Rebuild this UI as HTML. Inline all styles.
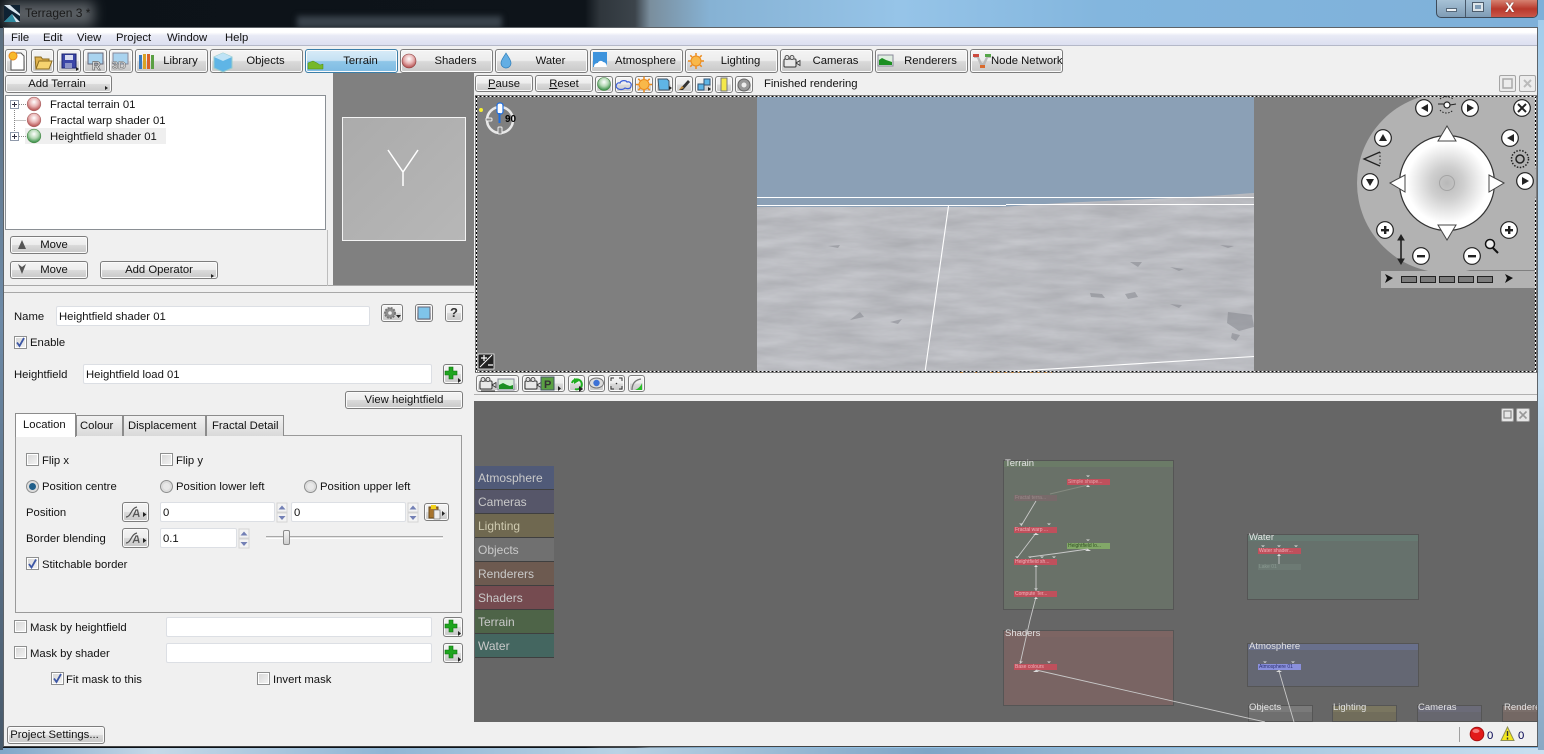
<!DOCTYPE html>
<html><head><meta charset="utf-8"><title>Terragen 3</title>
<style>
html,body{margin:0;padding:0;width:1544px;height:754px;overflow:hidden;background:#111}
body{position:relative;font:11.3px/16px "Liberation Sans",sans-serif;color:#111}
div,span.a{position:absolute;box-sizing:border-box}
.t{white-space:nowrap;margin-top:1px}
.b{border:1px solid #7d7d7d;border-radius:3px;background:linear-gradient(#f4f4f4,#ededed 48%,#dadada 52%,#c8c8c8);box-shadow:inset 0 0 0 1px #fbfbfb;text-align:center;white-space:nowrap}
.i{background:#fff;border:1px solid #dcdfe4;border-radius:2px;padding:2px 2px;white-space:nowrap;line-height:16px}
.c{width:13px;height:13px;border:1px solid #8e8f8f;background:linear-gradient(135deg,#d6d6d6,#f4f4f4);box-shadow:inset 0 0 0 1px #fff}
.s{width:79px;height:24px;left:475px;color:#c9c9c9;padding:5px 3px;font-size:12px;line-height:14px;border-bottom:1px solid #3f3f3f}
.g{border:1px solid #555;}
.n{height:6px;width:43px}
.l{color:#e2e2e2;font-size:9.5px;line-height:10px;white-space:nowrap}
.nt{font-size:5px;line-height:6px;white-space:nowrap;padding-left:1px;overflow:hidden}
.tb{top:49px;width:93px;height:24px;padding:3px 0 0 18px;line-height:16px}
</style></head>
<body>
<!-- desktop -->
<div style="left:0;top:0;width:1544px;height:754px;background:linear-gradient(90deg,#0c1218 0,#0e141a 585px,#2f363c 600px,#3c444b 635px,#7a8e9d 650px,#86b2d4 710px,#96c4e8 900px,#83b6de 1100px,#7eb0d9 1544px)"></div>
<div style="left:4px;top:2px;width:90px;height:24px;background:#6e7377;filter:blur(6px);opacity:.8"></div>
<div style="left:297px;top:16px;width:205px;height:12px;background:#3a434c;filter:blur(3px)"></div>
<div style="left:0;top:748px;width:1544px;height:6px;background:linear-gradient(90deg,#7fa6c8,#c6d9e8 10%,#8fb5d4 25%,#b9d2e4 40%,#7ea5c6 60%,#a5c6de 80%,#c9dff0)"></div>
<div style="left:0;top:28px;width:3px;height:722px;background:linear-gradient(#5c6f80,#6e8ba8 40%,#48596a)"></div>
<div style="left:1538px;top:20px;width:6px;height:730px;background:linear-gradient(#a3cdec,#c5def0 50%,#88a8c4)"></div>
<div class="t" style="left:25px;top:4px;color:#1a1a1a;font-size:12px">Terragen 3 *</div>
<!-- window controls -->
<div style="left:1436px;top:-2px;width:102px;height:20px;border:1px solid #3d4b5a;border-radius:0 0 5px 5px;background:linear-gradient(#a9c4d8,#7f9cb6);overflow:hidden">
 <div style="left:28px;top:0;width:1px;height:18px;background:#47586a"></div>
 <div style="left:54px;top:0;width:47px;height:18px;background:linear-gradient(#d98a7a,#b8392c 55%,#c9574a)"></div>
 <div style="left:9px;top:9px;width:11px;height:4px;background:#eef2f5;border:1px solid #56687a"></div>
 <div style="left:35px;top:3px;width:12px;height:10px;background:#dde5ea;border:1px solid #4d5d6d;box-shadow:inset 0 0 0 2px #dde5ea,inset 0 0 0 9px #7f9cb6"></div>
 <div class="t" style="left:68px;top:0;color:#fff;font:bold 14px/15px 'Liberation Sans',sans-serif;text-shadow:0 0 1px #333">X</div>
</div>
<!-- window -->
<div style="left:3px;top:27px;width:1535px;height:720px;background:#f0f0f0;border:1px solid #5e6368;border-bottom-color:#444"></div>
<div style="left:4px;top:28px;width:1533px;height:18px;background:linear-gradient(#fff,#fff 25%,#e8eaf5 45%,#dcdff0);border-bottom:1px solid #b4b8c8"></div>
<div class="t" style="left:11px;top:29px">File</div>
<div class="t" style="left:43px;top:29px">Edit</div>
<div class="t" style="left:77px;top:29px">View</div>
<div class="t" style="left:116px;top:29px">Project</div>
<div class="t" style="left:167px;top:29px">Window</div>
<div class="t" style="left:225px;top:29px">Help</div>
<!-- main toolbar -->
<div class="b" style="left:5px;top:49px;width:22px;height:24px"></div>
<div class="b" style="left:31px;top:49px;width:23px;height:24px"></div>
<div class="b" style="left:57px;top:49px;width:24px;height:24px"></div>
<div class="b" style="left:83px;top:49px;width:24px;height:24px"></div>
<div class="b" style="left:109px;top:49px;width:24px;height:24px"></div>
<div class="b tb" style="left:135px;width:73px">Library</div>
<div class="b tb" style="left:210px">Objects</div>
<div class="b tb" style="left:305px;background:linear-gradient(#d9ecf8,#c5e1f3 48%,#8fc6e8 52%,#7ebbe3);border-color:#3b7ea8">Terrain</div>
<div class="b tb" style="left:400px">Shaders</div>
<div class="b tb" style="left:495px">Water</div>
<div class="b tb" style="left:590px">Atmosphere</div>
<div class="b tb" style="left:685px">Lighting</div>
<div class="b tb" style="left:780px">Cameras</div>
<div class="b tb" style="left:875px">Renderers</div>
<div class="b tb" style="left:970px;padding-left:20px">Node Network</div>
<!-- left top -->
<div class="b" style="left:5px;top:75px;width:107px;height:18px;line-height:16px;padding-right:3px">Add Terrain</div>
<div style="left:5px;top:95px;width:321px;height:135px;background:#fff;border:1px solid #8a8f94"></div>
<div style="left:25px;top:128px;width:141px;height:16px;background:#efefef"></div>
<div class="t" style="left:50px;top:96px">Fractal terrain 01</div>
<div class="t" style="left:50px;top:112px">Fractal warp shader 01</div>
<div class="t" style="left:50px;top:128px">Heightfield shader 01</div>
<div style="left:333px;top:73px;width:141px;height:213px;background:#808080"></div>
<div style="left:342px;top:117px;width:124px;height:124px;background:linear-gradient(135deg,#ababab,#b7b7b7);border:1px solid #f4f4f4"></div>
<div class="b" style="left:10px;top:236px;width:78px;height:18px;line-height:17px;padding-left:10px">Move</div>
<div class="b" style="left:10px;top:261px;width:78px;height:18px;line-height:17px;padding-left:10px">Move</div>
<div class="b" style="left:100px;top:261px;width:118px;height:18px;line-height:17px">Add Operator</div>
<div style="left:4px;top:285px;width:470px;height:8px;border-top:1px solid #a8a8a8;border-bottom:1px solid #a8a8a8;background:#f0f0f0"></div>
<div style="left:327px;top:230px;width:1px;height:56px;background:#bdbdbd"></div>
<!-- form -->
<div class="t" style="left:14px;top:308px">Name</div>
<div class="i" style="left:56px;top:306px;width:314px;height:20px">Heightfield shader 01</div>
<div class="b" style="left:381px;top:304px;width:22px;height:18px"></div>
<div class="b" style="left:415px;top:304px;width:18px;height:18px"></div>
<div class="b" style="left:445px;top:304px;width:18px;height:18px;font:bold 13px/15px 'Liberation Sans',sans-serif;color:#333">?</div>
<div class="c" style="left:14px;top:336px"></div>
<div class="t" style="left:30px;top:334px">Enable</div>
<div class="t" style="left:14px;top:366px">Heightfield</div>
<div class="i" style="left:83px;top:364px;width:349px;height:20px">Heightfield load 01</div>
<div class="b" style="left:443px;top:364px;width:20px;height:20px"></div>
<div class="b" style="left:345px;top:391px;width:118px;height:18px;line-height:17px">View heightfield</div>
<!-- tabs -->
<div style="left:15px;top:435px;width:447px;height:178px;border:1px solid #9a9a9a;background:#f0f0f0"></div>
<div class="t" style="left:76px;top:414px;width:47px;height:21px;border:1px solid #8c8c8c;border-bottom:0;background:linear-gradient(#f2f2f2,#d9d9d9);padding:2px 0 0 3px">Colour</div>
<div class="t" style="left:123px;top:414px;width:83px;height:21px;border:1px solid #8c8c8c;border-bottom:0;background:linear-gradient(#f2f2f2,#d9d9d9);padding:2px 0 0 4px">Displacement</div>
<div class="t" style="left:206px;top:414px;width:78px;height:21px;border:1px solid #8c8c8c;border-bottom:0;background:linear-gradient(#f2f2f2,#d9d9d9);padding:2px 0 0 5px">Fractal Detail</div>
<div class="t" style="left:15px;top:412px;width:61px;height:24px;border:1px solid #8c8c8c;border-bottom:0;background:#fff;padding:3px 0 0 7px;">Location</div>
<div class="c" style="left:26px;top:453px"></div><div class="t" style="left:42px;top:452px">Flip x</div>
<div class="c" style="left:160px;top:453px"></div><div class="t" style="left:176px;top:452px">Flip y</div>
<div class="t" style="left:42px;top:478px">Position centre</div>
<div class="t" style="left:176px;top:478px">Position lower left</div>
<div class="t" style="left:320px;top:478px">Position upper left</div>
<div class="t" style="left:26px;top:504px">Position</div>
<div class="b" style="left:122px;top:502px;width:27px;height:20px"></div>
<div class="i" style="left:160px;top:502px;width:115px;height:20px">0</div>
<div class="i" style="left:291px;top:502px;width:115px;height:20px">0</div>
<div class="b" style="left:424px;top:503px;width:25px;height:18px"></div>
<div class="t" style="left:26px;top:530px">Border blending</div>
<div class="b" style="left:122px;top:528px;width:27px;height:20px"></div>
<div class="i" style="left:160px;top:528px;width:77px;height:20px">0.1</div>
<div style="left:266px;top:536px;width:177px;height:3px;background:#e4e4e4;border-top:1px solid #a8a8a8;border-bottom:1px solid #fff"></div>
<div style="left:283px;top:530px;width:7px;height:15px;background:linear-gradient(#f4f4f4,#cfcfcf);border:1px solid #8a8a8a;border-radius:2px"></div>
<div class="c" style="left:26px;top:557px"></div>
<div class="t" style="left:42px;top:556px">Stitchable border</div>
<div class="c" style="left:14px;top:620px"></div><div class="t" style="left:30px;top:619px">Mask by heightfield</div>
<div class="i" style="left:166px;top:617px;width:266px;height:20px"></div>
<div class="b" style="left:443px;top:617px;width:20px;height:20px"></div>
<div class="c" style="left:14px;top:646px"></div><div class="t" style="left:30px;top:645px">Mask by shader</div>
<div class="i" style="left:166px;top:643px;width:266px;height:20px"></div>
<div class="b" style="left:443px;top:643px;width:20px;height:20px"></div>
<div class="c" style="left:51px;top:672px"></div><div class="t" style="left:66px;top:671px">Fit mask to this</div>
<div class="c" style="left:257px;top:672px"></div><div class="t" style="left:273px;top:671px">Invert mask</div>
<!-- status -->
<div style="left:4px;top:722px;width:1533px;height:24px;background:#f0f0f0"></div>
<div class="b" style="left:7px;top:726px;width:98px;height:18px;line-height:17px;padding-right:3px">Project Settings...</div>
<div style="left:1459px;top:727px;width:1px;height:15px;background:#a0a0a0"></div>
<div class="t" style="left:1487px;top:727px;color:#000050">0</div>
<div class="t" style="left:1518px;top:727px;color:#000050">0</div>
<!-- render toolbar -->
<div class="b" style="left:475px;top:75px;width:58px;height:17px;line-height:16px"><u>P</u>ause</div>
<div class="b" style="left:535px;top:75px;width:58px;height:17px;line-height:16px"><u>R</u>eset</div>
<div class="b" style="left:595px;top:76px;width:18px;height:17px"></div>
<div class="b" style="left:615px;top:76px;width:18px;height:17px"></div>
<div class="b" style="left:635px;top:76px;width:18px;height:17px"></div>
<div class="b" style="left:655px;top:76px;width:18px;height:17px"></div>
<div class="b" style="left:675px;top:76px;width:18px;height:17px"></div>
<div class="b" style="left:695px;top:76px;width:18px;height:17px"></div>
<div class="b" style="left:715px;top:76px;width:18px;height:17px"></div>
<div class="b" style="left:735px;top:76px;width:18px;height:17px"></div>
<div class="t" style="left:764px;top:75px">Finished rendering</div>
<div style="left:1499px;top:75px;width:17px;height:17px;background:#ececec;border:1px solid #a5a5a5;border-radius:2px"></div>
<div style="left:1519px;top:75px;width:17px;height:17px;background:#ececec;border:1px solid #a5a5a5;border-radius:2px"></div>
<!-- viewport -->
<div style="left:475px;top:95px;width:1062px;height:278px;background:#7f7f7f;overflow:hidden"></div>
<div style="left:757px;top:97px;width:497px;height:274px;background:linear-gradient(#8aa0b7,#8ba1b6);"></div>
<!-- viewport bottom toolbar -->
<div class="b" style="left:476px;top:375px;width:43px;height:17px"></div>
<div class="b" style="left:522px;top:375px;width:43px;height:17px"></div>
<div class="b" style="left:568px;top:375px;width:17px;height:17px"></div>
<div class="b" style="left:588px;top:375px;width:17px;height:17px"></div>
<div class="b" style="left:608px;top:375px;width:17px;height:17px"></div>
<div class="b" style="left:628px;top:375px;width:17px;height:17px"></div>
<div style="left:474px;top:394px;width:1063px;height:7px;background:#f0f0f0;border-top:1px solid #b0b0b0"></div>
<!-- node network -->
<div style="left:474px;top:401px;width:1063px;height:321px;background:#666;overflow:hidden"></div>
<div style="left:1501px;top:408px;width:13px;height:14px;background:#e6e6e6;border:1px solid #999;border-radius:2px"></div>
<div style="left:1516px;top:408px;width:14px;height:14px;background:#e6e6e6;border:1px solid #999;border-radius:2px"></div>
<div class="s" style="top:466px;background:#505a78">Atmosphere</div>
<div class="s" style="top:490px;background:#565669">Cameras</div>
<div class="s" style="top:514px;background:#6f6850;color:#cfcab0">Lighting</div>
<div class="s" style="top:538px;background:#707070">Objects</div>
<div class="s" style="top:562px;background:#6d5a50">Renderers</div>
<div class="s" style="top:586px;background:#754b50">Shaders</div>
<div class="s" style="top:610px;background:#4e6448">Terrain</div>
<div class="s" style="top:634px;background:#446660">Water</div>
<div class="g" style="left:1003px;top:460px;width:171px;height:150px;background:linear-gradient(#6b7b67 0,#6b7b67 6px,#697168 6px)"></div>
<div class="g" style="left:1003px;top:630px;width:171px;height:76px;background:linear-gradient(#7d6563 0,#7d6563 6px,#796463 6px)"></div>
<div class="g" style="left:1247px;top:534px;width:172px;height:66px;background:linear-gradient(#667a72 0,#667a72 6px,#66716c 6px)"></div>
<div class="g" style="left:1247px;top:643px;width:172px;height:44px;background:linear-gradient(#69708c 0,#69708c 6px,#646773 6px)"></div>
<div class="g" style="left:1248px;top:705px;width:65px;height:17px;background:linear-gradient(#7a7a7a 0,#7a7a7a 6px,#6f6f6f 6px)"></div>
<div class="g" style="left:1332px;top:705px;width:65px;height:17px;background:linear-gradient(#7a7660 0,#7a7660 6px,#716d5b 6px)"></div>
<div class="g" style="left:1417px;top:705px;width:65px;height:17px;background:linear-gradient(#6b6b78 0,#6b6b78 6px,#67676f 6px)"></div>
<div class="g" style="left:1502px;top:705px;width:36px;height:17px;background:linear-gradient(#7a6e6a 0,#7a6e6a 6px,#746864 6px)"></div>
<div class="l" style="left:1005px;top:459px">Terrain</div>
<div class="l" style="left:1005px;top:629px">Shaders</div>
<div class="l" style="left:1249px;top:533px">Water</div>
<div class="l" style="left:1249px;top:642px">Atmosphere</div>
<div class="l" style="left:1249px;top:703px">Objects</div>
<div class="l" style="left:1333px;top:703px">Lighting</div>
<div class="l" style="left:1418px;top:703px">Cameras</div>
<div class="l" style="left:1504px;top:703px;width:33px;overflow:hidden">Renderers</div>
<div class="n nt" style="left:1067px;top:479px;background:#bf505c;color:#e8a0a8">Simple shape...</div>
<div class="n nt" style="left:1014px;top:495px;background:#786a6a;color:#9a8a8a">Fractal terra...</div>
<div class="n nt" style="left:1014px;top:527px;background:#bf505c;color:#f0b0b8">Fractal warp ...</div>
<div class="n nt" style="left:1067px;top:543px;background:#82a868;color:#2f4f22">Heightfield lo...</div>
<div class="n nt" style="left:1014px;top:559px;background:#bf505c;color:#f0b0b8">Heightfield sh...</div>
<div class="n nt" style="left:1014px;top:591px;background:#bf505c;color:#f0b0b8">Compute Ter...</div>
<div class="n nt" style="left:1014px;top:664px;background:#bf505c;color:#f0b0b8">Base colours</div>
<div class="n nt" style="left:1258px;top:548px;background:#bf505c;color:#f0b0b8">Water shader...</div>
<div class="n nt" style="left:1258px;top:564px;background:#6d7a74;color:#8a9a92">Lake 01</div>
<div class="n nt" style="left:1258px;top:664px;background:#8a90dc;color:#2a2f70">Atmosphere 01</div>

<!-- overlay drawing -->
<svg width="1544" height="754" viewBox="0 0 1544 754" style="position:absolute;left:0;top:0">
<defs>
<filter id="tx" x="0" y="0" width="100%" height="100%" color-interpolation-filters="sRGB"><feTurbulence type="fractalNoise" baseFrequency="0.018 0.09" numOctaves="5" seed="11"/><feColorMatrix type="matrix" values="0.13 0 0 0 0.665  0.13 0 0 0 0.67  0.13 0 0 0 0.69  0 0 0 0 1"/></filter>
<radialGradient id="ball" cx="50%" cy="35%" r="65%"><stop offset="0" stop-color="#fff"/><stop offset=".5" stop-color="#e8b4b4"/><stop offset="1" stop-color="#b24a4a"/></radialGradient>
<radialGradient id="ballg" cx="50%" cy="35%" r="65%"><stop offset="0" stop-color="#fff"/><stop offset=".5" stop-color="#b5d8b5"/><stop offset="1" stop-color="#2f8a3f"/></radialGradient>
<radialGradient id="joy"><stop offset="0" stop-color="#b8b8b8"/><stop offset=".35" stop-color="#cfcfcf"/><stop offset=".85" stop-color="#fff"/><stop offset="1" stop-color="#fff"/></radialGradient>
<clipPath id="rc"><rect x="757" y="97" width="497" height="274"/></clipPath>
<clipPath id="nc"><rect x="1350" y="97" width="186" height="192"/></clipPath>
<clipPath id="nn"><rect x="474" y="401" width="1063" height="321"/></clipPath>
<g id="nb"><circle r="8.3" fill="#fff" stroke="#222" stroke-width="1.2"/></g>
<g id="plus"><rect x="-4" y="-1" width="8" height="2.4" fill="#222"/><rect x="-1" y="-4" width="2.4" height="8" fill="#222"/></g>
<g id="addg"><path d="M-2 -6h4v4h4v4h-4v4h-4v-4h-4v-4h4z" fill="#1fa51f" stroke="#0b6e0b" stroke-width=".6"/><path d="M7 5l3 2.5-3 2.5z" fill="#222"/></g>
<g id="spin"><path d="M1 0h10v9h-10z" fill="#f3f3f3" stroke="#d4d4d4"/><path d="M6 2.500l3.500 4h-7z" fill="#7380b5"/><path d="M1 10h10v9h-10z" fill="#f3f3f3" stroke="#d4d4d4"/><path d="M6 17l3.500-4h-7z" fill="#7380b5"/></g>
<g id="curve"><path d="M4 14c5 0 5-9 11-10" fill="none" stroke="#555" stroke-width="1.200"/><path d="M11 14l3-7h1.500l1.500 7M12.500 11.500h3.500" fill="none" stroke="#555" stroke-width="1.300"/><path d="M21 9l3.500 2.500-3.500 2.500z" fill="#222"/></g>
<g id="cam"><rect x="0" y="4" width="12" height="8" rx="1" fill="#e8e8e8" stroke="#333"/><circle cx="3" cy="2.500" r="2" fill="#ddd" stroke="#333" stroke-width=".8"/><circle cx="8" cy="2.500" r="2" fill="#ddd" stroke="#333" stroke-width=".8"/><path d="M12 8l4-2.500v5z" fill="#ddd" stroke="#333" stroke-width=".8"/></g>
<g id="sun"><circle r="5" fill="#f8b84a" stroke="#ec8a1a"/><path d="M0-8v2.500M0 5.500v2.500M-8 0h2.500M5.500 0h2.500M-5.700-5.700l1.800 1.800M3.900 3.900l1.800 1.800M-5.700 5.700l1.800-1.800M3.900-3.900l1.800-1.800" stroke="#ec8a1a" stroke-width="1.500"/></g>
<g id="chk"><path d="M3 6.500l2.500 3.500 4.500-8" fill="none" stroke="#3d57a5" stroke-width="1.800"/></g>
<g id="radio"><circle cx="6.500" cy="6.500" r="6" fill="#dcdcdc" stroke="#8e8f8f"/><circle cx="6.500" cy="6.500" r="3.500" fill="#e8e8e8"/></g>
</defs>

<!-- logo -->
<rect x="4" y="5" width="16" height="17" fill="#0f2233"/>
<path d="M4 5h6l10 9v2L9 9zM4 22l8-8 4 4 4 4z" fill="#d8e4ee"/><path d="M4 22l8-8 4 8z" fill="#2f8aa0"/>

<!-- top toolbar icons -->
<path d="M11 53h10l3 3v14H11z" fill="#fff" stroke="#555"/><circle cx="13" cy="56" r="4" fill="#f7b92b" stroke="#e8891a"/>
<path d="M36 69l-1-12h6l1.500 2H49v3z" fill="#e0b24e" stroke="#8a6a1e"/><path d="M36 69l3-8h13l-3 8z" fill="#f6d36f" stroke="#8a6a1e"/>
<path d="M62 54h14v14H62z" fill="#3b46a8" stroke="#1d2570"/><rect x="65" y="55" width="8" height="5" fill="#d9ddf0"/><rect x="65" y="63" width="7" height="5" fill="#8b93c8"/><path d="M76 67l3 2-3 2z" fill="#222"/>
<rect x="88" y="53" width="15" height="11" fill="#a9d3ef" stroke="#667"/><text x="92" y="70" font-family="Liberation Sans" font-weight="bold" font-size="12" fill="#eee" stroke="#666" stroke-width=".7">R</text>
<rect x="113" y="53" width="15" height="11" fill="#a9d3ef" stroke="#889"/><text x="112" y="69" font-family="Liberation Sans" font-weight="bold" font-size="11" fill="#ddd" stroke="#777" stroke-width=".6">3D</text>
<g><rect x="139" y="55" width="3" height="14" fill="#3a7bbf"/><rect x="143" y="54" width="3" height="15" fill="#d9a325"/><rect x="147" y="54" width="3" height="15" fill="#d9622a"/><rect x="151" y="55" width="3" height="14" fill="#5aa043"/></g>
<path d="M214 57l9-4 9 4v11l-9 4-9-4z" fill="#5fb5e6" stroke="#9cc"/><path d="M214 57l9 4 9-4-9-4z" fill="#bfe3f6"/>
<path d="M308 69v-6l5-2 4 2 3 2 3-1v5z" fill="#76b82a" stroke="#4c8a12" stroke-width=".5"/>
<circle cx="409" cy="61" r="7" fill="url(#ball)" stroke="#8a3a3a" stroke-width=".6"/>
<path d="M506 53c3 5 5 7 5 10a5 5 0 0 1-10 0c0-3 2-5 5-10z" fill="#63aee4" stroke="#2e7db8" stroke-width=".7"/>
<rect x="593" y="52" width="14" height="15" fill="#3d93dc"/><path d="M594 67c0-3 2-4 4-4 0-2 4-3 5-1 2 0 4 2 4 5z" fill="#fff"/>
<use href="#sun" x="696" y="61"/>
<use href="#cam" x="784" y="55"/>
<rect x="878" y="55" width="15" height="11" fill="#dfeee0" stroke="#889"/><path d="M879 65v-5l3-2 4 2 3 1 3 1v3z" fill="#1c8f22"/>
<path d="M974 54h5v3l3 6h1l3-6v-3h5v4h-3l-3 7v3h-5v-3l-3-7h-3z" fill="#bbb"/><rect x="973" y="54" width="6" height="3" fill="#cc4b3f"/><rect x="985" y="54" width="6" height="3" fill="#55a648"/><rect x="980" y="65" width="5" height="3" fill="#d96a2e"/>

<!-- small arrows on buttons -->
<path d="M105 86l3 2-3 2z M211 274l3 2-3 2z" fill="#222"/>
<path d="M22 240l-4 9h8zM18 264l4 10 4-10-4 3z" fill="#555"/>

<!-- tree -->
<g fill="none" stroke="#888" stroke-dasharray="1 1"><path d="M14.500 108V132M19 104.500h8M14.500 120.500h12M19 136.500h8"/></g>
<g fill="#fff" stroke="#8f99aa"><rect x="10.500" y="100.500" width="8" height="8"/><rect x="10.500" y="132.500" width="8" height="8"/></g>
<path d="M12 104.500h5M14.500 102v5M12 136.500h5M14.500 134v5" stroke="#334"/>
<circle cx="34" cy="104" r="6.800" fill="url(#ball)" stroke="#a66" stroke-width=".6"/>
<circle cx="34" cy="120" r="6.800" fill="url(#ball)" stroke="#a66" stroke-width=".6"/>
<circle cx="34" cy="136" r="6.800" fill="url(#ballg)" stroke="#4a8a4a" stroke-width=".6"/>
<!-- preview -->
<path d="M388 150l15 22 15-22M403 172v14" fill="none" stroke="#fff" stroke-width="1.500"/>

<!-- form icons -->
<circle cx="390" cy="313" r="5" fill="#8f8f8f" stroke="#777" stroke-width="2" stroke-dasharray="2 1"/><circle cx="390" cy="313" r="1.800" fill="#eee"/><path d="M396 315h5l-2.500 3z" fill="#222"/>
<rect x="418" y="307" width="12" height="12" fill="#7fc4ea" stroke="#667"/>
<use href="#chk" x="14" y="336"/><use href="#chk" x="26" y="557.500"/><use href="#chk" x="51" y="672"/>
<use href="#addg" x="451" y="373"/><use href="#addg" x="451" y="626"/><use href="#addg" x="451" y="652"/>
<use href="#radio" x="26" y="480"/><use href="#radio" x="160" y="480"/><use href="#radio" x="304" y="480"/>
<circle cx="32.500" cy="486.500" r="3.500" fill="#1f5f8a"/>
<use href="#curve" x="122" y="503"/><use href="#curve" x="122" y="529"/>
<use href="#spin" x="276" y="503"/><use href="#spin" x="407" y="503"/><use href="#spin" x="238" y="529"/>
<rect x="429" y="507" width="9" height="11" fill="#a8742c" stroke="#6a4a1a"/><rect x="431" y="505" width="5" height="4" fill="#f2d21a"/><rect x="434" y="510" width="6" height="9" fill="#eee" stroke="#777" stroke-width=".7"/><path d="M442 511l3 2.500-3 2.500z" fill="#222"/>

<!-- render toolbar icons -->
<circle cx="604" cy="84" r="6.500" fill="url(#ballg)" stroke="#3f7f3f" stroke-width=".6"/>
<path d="M617 88c-2-2 0-6 3-5 1-3 6-3 7-1 3-1 5 2 4 4 0 3-4 3-6 2-2 2-6 2-8 0z" fill="none" stroke="#3c5fd8" stroke-width="1.200"/>
<use href="#sun" x="644" y="84.500"/>
<path d="M658 79h9l2 2v9h-10z" fill="#5fb5e6" stroke="#456"/><path d="M669 86l3 2-3 2z" fill="#222"/>
<path d="M679 90l9-10 2 2-7 8z" fill="#333"/><path d="M679 90l3-4 2 2z" fill="#c58f3e"/>
<path d="M698 84h6v6h-6zM704 79h6v6h-6z" fill="#5fb5e6" stroke="#357"/><path d="M708 87l3 2-3 2z" fill="#222"/>
<rect x="721" y="78" width="6" height="13" fill="#f4e84a" stroke="#777"/>
<circle cx="744" cy="85" r="6" fill="#999" stroke="#666"/><circle cx="744" cy="85" r="2.500" fill="#eee"/>
<rect x="1503" y="79" width="9" height="9" fill="none" stroke="#aaa" stroke-width="1.500"/>
<path d="M1524 80l7 7M1531 80l-7 7" stroke="#bbb" stroke-width="2"/>

<!-- render -->
<g clip-path="url(#rc)">
<svg x="757" y="193" width="497" height="178"><rect width="497" height="178" filter="url(#tx)"/></svg>
<path d="M757 97H1254V193L1210 196 1150 199 1060 203 1000 207H757z" fill="#8ba0b6"/>
<g fill="#85878e" opacity=".55">
<path d="M1090 293l12 1 3 4-14-1zM1125 294l10-2 3 5-10 2zM1228 312l24 3 2 12-15 4-12-8zM1232 333l8 2-4 6-5-3zM1170 304l12 1-3 3z"/>
<path d="M828 246l12-1-2 3zM1170 267l14 2-5 2zM1130 262l12 0-4 5zM860 312l-10 8 14-3zM890 322l12-3-4 5zM1220 245l14 1-6 2z"/>
</g>
<path d="M757 197.500H1254M757 205.500H1006M1006 204.500H1254M948.500 206L925 372M1254 356.500L1100 366 1000 372" fill="none" stroke="#fff" stroke-width="1.100"/>
</g>
<path d="M960 372h4M975 372h2M990 372h30M1030 372h22" stroke="#f08a1a" stroke-width="1" stroke-dasharray="3 4"/>

<!-- dotted viewport frame -->
<g fill="none" stroke-dasharray="2 2">
<path d="M475.500 96.500H1536.500M475.500 371.500H1536.500M476.500 96V372M1535.500 96V372" stroke="#000"/>
<path d="M475.500 96.500H1536.500M475.500 371.500H1536.500M476.500 96V372M1535.500 96V372" stroke="#fff" stroke-dashoffset="2"/>
</g>

<!-- compass -->
<circle cx="481" cy="110" r="2" fill="#f5ee30"/>
<circle cx="500" cy="120" r="13" fill="none" stroke="#e8e8e8" stroke-width="2.500"/>
<rect x="497" y="103" width="6" height="11" rx="2.500" fill="#fff" stroke="#1f6fe0" stroke-width="1.200"/>
<rect x="498.500" y="113" width="2" height="10" fill="#1f6fe0"/>
<text x="505" y="122" font-family="Liberation Sans" font-size="10" font-weight="bold" fill="#000">90</text>
<rect x="486" y="118" width="6" height="3" rx="1" fill="#888" stroke="#eee"/><rect x="498" y="127" width="4" height="7" rx="1" fill="#888" stroke="#eee"/>
<rect x="478" y="354" width="16" height="15" fill="#222" stroke="#eee" stroke-width=".8"/><path d="M480 367l12-12" stroke="#fff"/><path d="M481 358h6M484 355v6M488 365h5" stroke="#fff" stroke-width="1.200"/>

<!-- nav control -->
<g clip-path="url(#nc)">
<circle cx="1447" cy="183" r="90" fill="#b2b2b2"/>
<rect x="1447" y="97" width="88" height="173" fill="#b2b2b2"/>
</g>
<rect x="1381" y="271" width="154" height="17" fill="#b2b2b2"/>
<circle cx="1447" cy="183" r="47.500" fill="url(#joy)" stroke="#333" stroke-width="1.200"/>
<circle cx="1447" cy="183" r="7.500" fill="none" stroke="#a4a4a4"/>
<g fill="#fff" stroke="#444"><path d="M1447 126l9 15h-18zM1447 240l-9-15h18zM1390 183l15-8v17zM1504 183l-15-8v17z"/></g>
<use href="#nb" x="1424" y="108"/><path d="M1428 104v8l-7-4z" fill="#222"/>
<use href="#nb" x="1470" y="108"/><path d="M1467 104v8l7-4z" fill="#222"/>
<use href="#nb" x="1522" y="108"/><path d="M1518 104l8 8M1526 104l-8 8" stroke="#222" stroke-width="2"/>
<use href="#nb" x="1383" y="138"/><path d="M1379 141h8l-4-7z" fill="#222"/>
<use href="#nb" x="1370" y="182"/><path d="M1366 179h8l-4 7z" fill="#222"/>
<use href="#nb" x="1510" y="138"/><path d="M1514 134v8l-7-4z" fill="#222"/>
<use href="#nb" x="1525" y="181"/><path d="M1522 177v8l7-4z" fill="#222"/>
<use href="#nb" x="1385" y="230"/><use href="#plus" x="1385" y="230"/>
<use href="#nb" x="1509" y="230"/><use href="#plus" x="1509" y="230"/>
<use href="#nb" x="1421" y="256"/><rect x="1417" y="255" width="8" height="2.400" fill="#222"/>
<use href="#nb" x="1472" y="256"/><rect x="1468" y="255" width="8" height="2.400" fill="#222"/>
<path d="M1380 152l-16 7 16 7" fill="none" stroke="#222" stroke-width="1.300"/><path d="M1380 152v14" stroke="#222" stroke-dasharray="1.500 2"/>
<circle cx="1520" cy="159" r="4" fill="none" stroke="#222" stroke-width="1.500"/><circle cx="1520" cy="159" r="8.500" fill="none" stroke="#222" stroke-width="1.500" stroke-dasharray="1.500 1.500"/>
<circle cx="1447" cy="105" r="3" fill="#fff" stroke="#222" stroke-width="1.200"/><path d="M1438 104h6M1450 105l6-1" stroke="#222"/><path d="M1440 110c3 4 10 4 13 0M1440 99c3-3 10-3 13 0" fill="none" stroke="#222" stroke-dasharray="1.500 1.500"/>
<path d="M1401 235l-3 5h6zM1401 264l-3-5h6z" fill="#222" stroke="#222"/><path d="M1401 238v24" stroke="#222" stroke-width="1.600"/>
<circle cx="1490" cy="244" r="4.500" fill="#eee" stroke="#111" stroke-width="1.500"/><path d="M1493 248l5 5" stroke="#111" stroke-width="2"/>
<path d="M1385 274l8 4-8 5 2-5zM1505 274l8 4-8 5 2-5z" fill="#111"/>
<g fill="#7c7c7c" stroke="#222"><rect x="1401.500" y="276.500" width="15" height="6"/><rect x="1420.500" y="276.500" width="15" height="6"/><rect x="1439.500" y="276.500" width="15" height="6"/><rect x="1458.500" y="276.500" width="15" height="6"/><rect x="1477.500" y="276.500" width="15" height="6"/></g>

<!-- viewport toolbar icons -->
<use href="#cam" x="480" y="377"/><path d="M481 391h14" stroke="#222"/>
<rect x="498" y="379" width="16" height="11" fill="#d9efd9" stroke="#889"/><path d="M499 389v-4l4-2 4 2 3 1 3-1v4z" fill="#1c8f22"/>
<use href="#cam" x="525" y="377"/>
<rect x="541" y="377" width="13" height="13" fill="#5aa043" stroke="#456"/><text x="544" y="388" font-family="Liberation Sans" font-weight="bold" font-size="11" fill="#333">P</text><path d="M558 386l3 2.500-3 2.500z" fill="#222"/>
<path d="M572 383a5 5 0 1 1 3 6" fill="none" stroke="#1fae1f" stroke-width="2"/><path d="M574 378l5 3-5 3z" fill="#1fae1f"/><path d="M579 386l4 3-4 3z" fill="#222"/>
<ellipse cx="596.500" cy="383" rx="7" ry="5" fill="#ddd" stroke="#777"/><circle cx="596.500" cy="383" r="3.200" fill="#3d72d6"/>
<path d="M611 381v-3h3M619 378h3v3M622 386v3h-3M614 389h-3v-3" fill="none" stroke="#333"/><circle cx="616.500" cy="383.500" r=".8" fill="#333"/>
<path d="M632 390c0-6 3-10 9-11" fill="none" stroke="#777" stroke-width="1.300"/><path d="M635 390c3-1 6-4 7-7v7z" fill="#27c027"/>

<!-- node window buttons -->
<rect x="1504" y="411" width="7" height="7" fill="none" stroke="#888" stroke-width="1.200"/><path d="M1519.500 411.500l7 7M1526.500 411.500l-7 7" stroke="#999" stroke-width="1.600"/>

<!-- graph lines -->
<g clip-path="url(#nn)" fill="none" stroke="#c8c8c8" stroke-width=".9">
<path d="M1036 501L1021 526M1036 533L1017 558M1088 549L1060 553 1030 557M1036 565V591M1036 597L1030 620 1020 664"/>
<path d="M1036 670L1265 722M1279 671L1294 722M1279 554V564"/>
<path d="M1088 485L1050 494" stroke="#858a80"/>
</g>
<g fill="#ddd">
<path d="M1021 525l2-1.500h-4zM1049 525l2-1.500h-4zM1088 477l2-1.500h-4zM1088 541l2-1.500h-4zM1017 558l2-1.500h-4zM1030 558l2-1.500h-4zM1042 558l2-1.500h-4zM1054 558l2-1.500h-4zM1036 590l2-1.500h-4zM1263 547l2-1.500h-4zM1279 547l2-1.500h-4zM1296 547l2-1.500h-4zM1265 663l2-1.500h-4zM1293 663l2-1.500h-4zM1021 663l2-1.500h-4zM1049 663l2-1.500h-4z"/>
<path d="M1036 533l3 2h-6zM1088 485l2 2h-4zM1088 549l3 2h-6zM1036 565l2 2h-4zM1036 597l2 2h-4zM1279 554l2 2h-4zM1279 670l3 2h-6zM1036 670l3 2h-6z"/>
</g>
<!-- status icons -->
<circle cx="1477" cy="734" r="6.800" fill="#e21a1a" stroke="#a51010"/><ellipse cx="1476" cy="731" rx="3.500" ry="2" fill="#f57a7a"/>
<path d="M1507.500 727l6.500 13.500h-13z" fill="#f3e71c" stroke="#8f8f55"/><path d="M1507.500 731v5M1507.500 737.500v2" stroke="#333" stroke-width="1.400"/>
</svg>
</body></html>
